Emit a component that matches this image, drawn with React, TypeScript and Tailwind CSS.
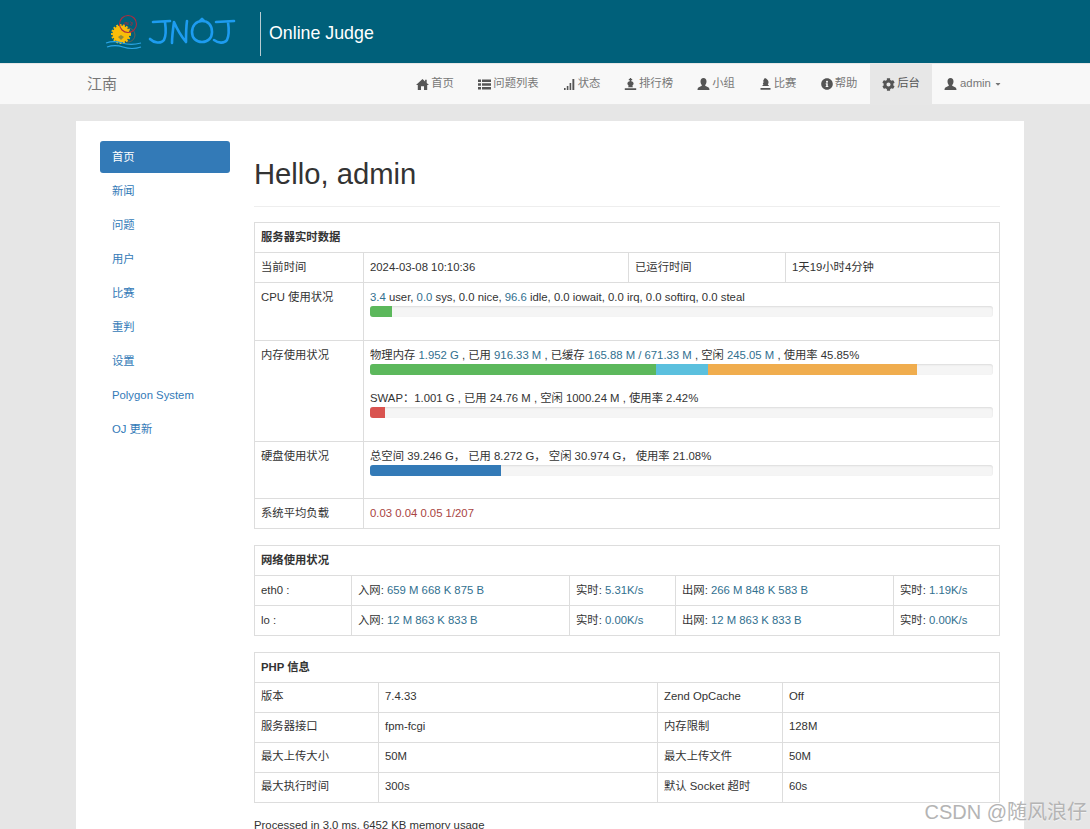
import { FaInfoCircle, FaCog, FaCaretDown } from "react-icons/fa";
import type { ReactNode } from "react";

function Glyph({ children }: { children: ReactNode }) {
  return (
    <svg width="13" height="13" viewBox="0 0 13 13" fill="currentColor" className="block">
      {children}
    </svg>
  );
}

const HomeIcon = () => <Glyph><path d="M6.5 1l2.6 2.4V1.8h1.6v3.1L13 7h-1.8v5H8V8.2H5V12H1.8V7H0z" /></Glyph>;
const ListIcon = () => (
  <Glyph>
    <path d="M0 1.5h3v2.4H0zM4 1.5h9v2.4H4zM0 5.3h3v2.4H0zM4 5.3h9v2.4H4zM0 9.1h3v2.4H0zM4 9.1h9v2.4H4z" />
  </Glyph>
);
const SignalIcon = () => <Glyph><path d="M1 10h1.6v2H1zM3.8 8h1.6v4H3.8zM6.6 5h1.6v7H6.6zM9.4 1h1.9v11H9.4z" /></Glyph>;
const KingIcon = () => (
  <Glyph>
    <path d="M5.8 0h1.4v1h1v1.2h-1v1C8.6 3.5 9.6 4.4 9.6 5.6c0 1.2-1 1.9-1.5 2.6h.7v1H4.2v-1h.7C4.4 7.5 3.4 6.8 3.4 5.6c0-1.2 1-2.1 2.4-2.4v-1h-1V1h1zM.8 10.3h11.4V12H.8z" />
  </Glyph>
);
const UserIcon = () => (
  <Glyph>
    <path d="M6.5 0C8.4 0 9.5 1.4 9.5 3.4c0 1.5-.6 2.8-1.4 3.6 0 .9.5 1.2 2 1.7 1.5.5 2.4 1.1 2.4 3.3H.5c0-2.2.9-2.8 2.4-3.3 1.5-.5 2-.8 2-1.7C4.1 6.2 3.5 4.9 3.5 3.4 3.5 1.4 4.6 0 6.5 0z" />
  </Glyph>
);
const PawnIcon = () => (
  <Glyph>
    <path d="M5.8 0c1.8.6 3.4 2 3.7 3.8.2 1.2-.3 2.2-.7 3.2h.9v1H3.5V7h1c-.3-.6-.6-1-.6-1.5 0-.8.6-1.1 1.4-1.7L3.9 3.5C4.2 2.2 5 1.2 5.8 0zM1.5 10h10v1.8h-10z" />
  </Glyph>
);

const nav = [
  { icon: <HomeIcon />, label: "首页", w: "w-[62px]" },
  { icon: <ListIcon />, label: "问题列表", w: "w-[85px]" },
  { icon: <SignalIcon />, label: "状态", w: "w-[61px]" },
  { icon: <KingIcon />, label: "排行榜", w: "w-[73px]" },
  { icon: <UserIcon />, label: "小组", w: "w-[62px]" },
  { icon: <PawnIcon />, label: "比赛", w: "w-[61px]" },
  { icon: <FaInfoCircle className="text-[12px]" />, label: "帮助", w: "w-[62px]" },
];

const side = ["首页", "新闻", "问题", "用户", "比赛", "重判", "设置", "Polygon System", "OJ 更新"];

function B({ children }: { children: ReactNode }) {
  return <span className="text-[#31708f]">{children}</span>;
}

function Td({ children }: { children: ReactNode }) {
  return <td className="h-[30px] border border-[#ddd] p-[6px] align-top leading-[16px]">{children}</td>;
}

function PhpTd({ children }: { children: ReactNode }) {
  return <td className="h-[30px] border border-[#ddd] px-[6px] pb-[7px] pt-[5px] align-top leading-[16px]">{children}</td>;
}

function Label({ h, children }: { h: string; children: ReactNode }) {
  return <td className={`${h} border border-[#ddd] p-[6px] align-top leading-[16px]`}>{children}</td>;
}

function Wide({ h, children }: { h: string; children: ReactNode }) {
  return <td colSpan={3} className={`${h} border border-[#ddd] p-[6px] align-top leading-[16px]`}>{children}</td>;
}

function Title({ span, children }: { span: number; children: ReactNode }) {
  return (
    <tr>
      <td colSpan={span} className="h-[30px] border border-[#ddd] p-[6px] align-top font-bold leading-[16px]">
        {children}
      </td>
    </tr>
  );
}

function Bar({ children }: { children: ReactNode }) {
  return <div className="mt-[1px] flex h-[11px] overflow-hidden rounded-[3px] bg-[#f5f5f5] shadow-[inset_0_1px_2px_rgba(0,0,0,0.1)]">{children}</div>;
}

function Logo() {
  return (
    <svg width="132" height="44" viewBox="0 0 132 44" className="block">
      <circle cx="24" cy="23" r="7" fill="none" stroke="#7d5a4a" strokeWidth="0.8" />
      <circle cx="17" cy="22" r="8.5" fill="#f9bd0a" stroke="#f9bd0a" strokeWidth="3" strokeDasharray="1.8 1.4" />
      <path d="M14 25l3-2 3 2-3 3z" fill="#8f8a3c" />
      <circle cx="24" cy="12" r="8.5" fill="none" stroke="#b02a3c" strokeWidth="1.1" />
      <path d="M19 12c1 2 2 1 2-2M22 13v-3l2 3v-3M26 10c2-1 2 3 0 3M28 10c1 2 0 3-1 4" fill="none" stroke="#b02a3c" strokeWidth="0.6" />
      <path d="M2 31c6-2 10-2 16 0s12 2 19 0M3 35c6-2 10-2 16 0s12 2 18 0" fill="none" stroke="#2aa5e6" strokeWidth="1.2" />
      <g fill="none" stroke="#1d9cf0" strokeWidth="2.6" strokeLinecap="round" strokeLinejoin="round">
        <path d="M49 10l17-1M61 10c1 7 1 14-1 18-3 4-10 3-14-1" />
        <path d="M68 31c0-7 1-14 2-21 3 7 7 14 12 20 0-7 0-14 1-21" />
        <path d="M98 9c-6 0-10 5-10 11 0 6 4 10 10 10s10-4 10-10c0-7-4-11-10-11M96 9l2-2 2 2" />
        <path d="M112 10l18-1M124 10c1 7 1 14-1 18-3 4-9 3-13 0" />
      </g>
    </svg>
  );
}

export default function App() {
  return (
    <div className="relative flex h-[829px] flex-col overflow-hidden bg-[#e6e6e6] font-['Liberation_Sans','Noto_Sans_CJK_SC',sans-serif] text-[11.34px] text-[#333]">
      <header className="flex h-[63px] shrink-0 items-center bg-[#00607a] pl-[104px] pt-[4px]">
        <Logo />
        <div className="ml-[24px] h-[44px] w-px bg-[#b9ccd2]" />
        <div className="ml-[8px] text-[17.8px] text-white">Online Judge</div>
      </header>

      <nav className="flex h-[42px] shrink-0 items-center border-t border-b border-[#e7e7e7] bg-[#f8f8f8] pl-[87px] pr-[76px] text-[#777]">
        <div className="text-[15px]">江南</div>
        <div className="ml-auto flex h-full items-stretch">
          {nav.map((n) => (
            <div key={n.label} className={`${n.w} flex items-center justify-center gap-[2px] whitespace-nowrap`}>
              <span className="text-[#555]">{n.icon}</span>
              {n.label}
            </div>
          ))}
          <div className="flex w-[62px] items-center justify-center gap-[2px] bg-[#e7e7e7] text-[#555]">
            <span className="text-[13px]"><FaCog /></span>
            后台
          </div>
          <div className="flex w-[82px] items-center justify-center gap-[3px]">
            <span className="text-[#555]"><UserIcon /></span>
            admin
            <FaCaretDown className="text-[8px]" />
          </div>
        </div>
      </nav>

      <main className="ml-[76px] mr-[66px] mt-[16px] flex flex-1 gap-[24px] bg-white px-[24px] pt-[20px]">
        <aside className="flex w-[130px] shrink-0 flex-col gap-[1.9px]">
          {side.map((s, i) => (
            <div key={s} className={`flex h-[32.2px] items-center rounded-[3px] px-[12px] ${i === 0 ? "bg-[#337ab7] text-white" : "text-[#337ab7]"}`}>
              {s}
            </div>
          ))}
        </aside>

        <section className="min-w-0 flex-1">
          <h1 className="mt-[17px] border-b border-[#eee] pb-[16px] text-[29.2px] font-normal leading-[32px] text-[#333]">Hello, admin</h1>

          <table className="mt-[15px] w-[746px] table-fixed border-collapse">
            <colgroup>
              <col className="w-[109px]" />
              <col className="w-[265px]" />
              <col className="w-[157px]" />
              <col />
            </colgroup>
            <tbody>
              <Title span={4}>服务器实时数据</Title>
              <tr>
                <Td>当前时间</Td>
                <Td>2024-03-08 10:10:36</Td>
                <Td>已运行时间</Td>
                <Td>1天19小时4分钟</Td>
              </tr>
              <tr>
                <Label h="h-[58px]">CPU 使用状况</Label>
                <Wide h="h-[58px]">
                  <B>3.4</B> user, <B>0.0</B> sys, 0.0 nice, <B>96.6</B> idle, 0.0 iowait, 0.0 irq, 0.0 softirq, 0.0 steal
                  <Bar><div className="w-[3.5%] bg-[#5cb85c]" /></Bar>
                </Wide>
              </tr>
              <tr>
                <Label h="h-[101px]">内存使用状况</Label>
                <Wide h="h-[101px]">
                  物理内存 <B>1.952 G</B> , 已用 <B>916.33 M</B> , 已缓存 <B>165.88 M / 671.33 M</B> , 空闲 <B>245.05 M</B> , 使用率 45.85%
                  <Bar>
                    <div className="w-[45.85%] bg-[#5cb85c]" />
                    <div className="w-[8.35%] bg-[#5bc0de]" />
                    <div className="w-[33.55%] bg-[#f0ad4e]" />
                  </Bar>
                  <div className="mt-[15px]">SWAP：1.001 G , 已用 24.76 M , 空闲 1000.24 M , 使用率 2.42%</div>
                  <Bar><div className="w-[2.42%] bg-[#d9534f]" /></Bar>
                </Wide>
              </tr>
              <tr>
                <Label h="h-[57px]">硬盘使用状况</Label>
                <Wide h="h-[57px]">
                  总空间 39.246 G， 已用 8.272 G， 空闲 30.974 G， 使用率 21.08%
                  <Bar><div className="w-[21.08%] bg-[#337ab7]" /></Bar>
                </Wide>
              </tr>
              <tr>
                <Td>系统平均负载</Td>
                <td colSpan={3} className="h-[30px] border border-[#ddd] p-[6px] align-top leading-[16px] text-[#a94442]">0.03 0.04 0.05 1/207</td>
              </tr>
            </tbody>
          </table>

          <table className="mt-[16px] w-[746px] table-fixed border-collapse">
            <colgroup>
              <col className="w-[97px]" />
              <col className="w-[218px]" />
              <col className="w-[106px]" />
              <col className="w-[218px]" />
              <col />
            </colgroup>
            <tbody>
              <Title span={5}>网络使用状况</Title>
              <tr>
                <Td>eth0 :</Td>
                <Td>入网: <B>659 M 668 K 875 B</B></Td>
                <Td>实时: <B>5.31K/s</B></Td>
                <Td>出网: <B>266 M 848 K 583 B</B></Td>
                <Td>实时: <B>1.19K/s</B></Td>
              </tr>
              <tr>
                <Td>lo :</Td>
                <Td>入网: <B>12 M 863 K 833 B</B></Td>
                <Td>实时: <B>0.00K/s</B></Td>
                <Td>出网: <B>12 M 863 K 833 B</B></Td>
                <Td>实时: <B>0.00K/s</B></Td>
              </tr>
            </tbody>
          </table>

          <table className="mt-[16px] w-[746px] table-fixed border-collapse">
            <colgroup>
              <col className="w-[124px]" />
              <col className="w-[279px]" />
              <col className="w-[125px]" />
              <col />
            </colgroup>
            <tbody>
              <Title span={4}>PHP 信息</Title>
              <tr><PhpTd>版本</PhpTd><PhpTd>7.4.33</PhpTd><PhpTd>Zend OpCache</PhpTd><PhpTd>Off</PhpTd></tr>
              <tr><PhpTd>服务器接口</PhpTd><PhpTd>fpm-fcgi</PhpTd><PhpTd>内存限制</PhpTd><PhpTd>128M</PhpTd></tr>
              <tr><PhpTd>最大上传大小</PhpTd><PhpTd>50M</PhpTd><PhpTd>最大上传文件</PhpTd><PhpTd>50M</PhpTd></tr>
              <tr><PhpTd>最大执行时间</PhpTd><PhpTd>300s</PhpTd><PhpTd>默认 Socket 超时</PhpTd><PhpTd>60s</PhpTd></tr>
            </tbody>
          </table>

          <p className="mt-[14px] leading-[16px]">Processed in 3.0 ms, 6452 KB memory usage</p>
        </section>
      </main>

      <div className="absolute bottom-[4px] right-[3px] text-[20px] leading-[26px] text-[#b4b4b4] [text-shadow:0_1px_1px_rgba(255,255,255,0.6)]">CSDN @随风浪仔</div>
    </div>
  );
}
